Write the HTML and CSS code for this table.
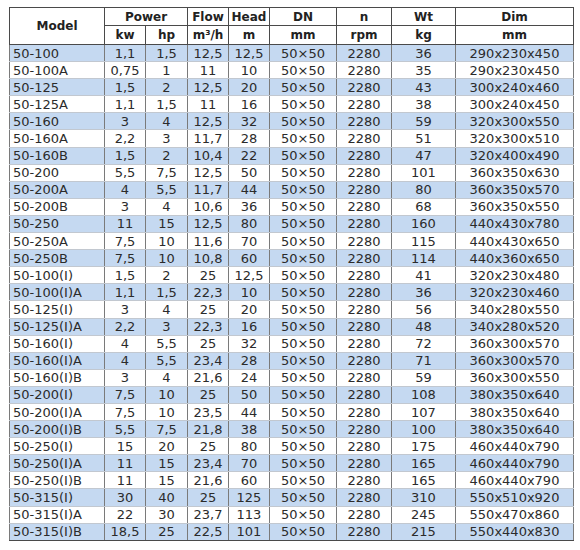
FILE: index.html
```html
<!DOCTYPE html>
<html>
<head>
<meta charset="utf-8">
<link rel="stylesheet" href="styles.css">
</head>
<body>
<table class="spec">
<colgroup>
<col class="c-model"><col class="c-kw"><col class="c-hp"><col class="c-flow"><col class="c-head"><col class="c-dn"><col class="c-n"><col class="c-wt"><col class="c-dim">
</colgroup>
<thead>
<tr class="h1">
<th rowspan="2">Model</th><th colspan="2">Power</th><th>Flow</th><th>Head</th><th>DN</th><th>n</th><th>Wt</th><th>Dim</th>
</tr>
<tr class="h2">
<th>kw</th><th>hp</th><th>m³/h</th><th>m</th><th>mm</th><th>rpm</th><th>kg</th><th>mm</th>
</tr>
</thead>
<tbody>
<tr><td>50-100</td><td>1,1</td><td>1,5</td><td>12,5</td><td>12,5</td><td>50×50</td><td>2280</td><td>36</td><td>290x230x450</td></tr>
<tr><td>50-100A</td><td>0,75</td><td>1</td><td>11</td><td>10</td><td>50×50</td><td>2280</td><td>35</td><td>290x230x450</td></tr>
<tr><td>50-125</td><td>1,5</td><td>2</td><td>12,5</td><td>20</td><td>50×50</td><td>2280</td><td>43</td><td>300x240x460</td></tr>
<tr><td>50-125A</td><td>1,1</td><td>1,5</td><td>11</td><td>16</td><td>50×50</td><td>2280</td><td>38</td><td>300x240x450</td></tr>
<tr><td>50-160</td><td>3</td><td>4</td><td>12,5</td><td>32</td><td>50×50</td><td>2280</td><td>59</td><td>320x300x550</td></tr>
<tr><td>50-160A</td><td>2,2</td><td>3</td><td>11,7</td><td>28</td><td>50×50</td><td>2280</td><td>51</td><td>320x300x510</td></tr>
<tr><td>50-160B</td><td>1,5</td><td>2</td><td>10,4</td><td>22</td><td>50×50</td><td>2280</td><td>47</td><td>320x400x490</td></tr>
<tr><td>50-200</td><td>5,5</td><td>7,5</td><td>12,5</td><td>50</td><td>50×50</td><td>2280</td><td>101</td><td>360x350x630</td></tr>
<tr><td>50-200A</td><td>4</td><td>5,5</td><td>11,7</td><td>44</td><td>50×50</td><td>2280</td><td>80</td><td>360x350x570</td></tr>
<tr><td>50-200B</td><td>3</td><td>4</td><td>10,6</td><td>36</td><td>50×50</td><td>2280</td><td>68</td><td>360x350x550</td></tr>
<tr><td>50-250</td><td>11</td><td>15</td><td>12,5</td><td>80</td><td>50×50</td><td>2280</td><td>160</td><td>440x430x780</td></tr>
<tr><td>50-250A</td><td>7,5</td><td>10</td><td>11,6</td><td>70</td><td>50×50</td><td>2280</td><td>115</td><td>440x430x650</td></tr>
<tr><td>50-250B</td><td>7,5</td><td>10</td><td>10,8</td><td>60</td><td>50×50</td><td>2280</td><td>114</td><td>440x360x650</td></tr>
<tr><td>50-100(I)</td><td>1,5</td><td>2</td><td>25</td><td>12,5</td><td>50×50</td><td>2280</td><td>41</td><td>320x230x480</td></tr>
<tr><td>50-100(I)A</td><td>1,1</td><td>1,5</td><td>22,3</td><td>10</td><td>50×50</td><td>2280</td><td>36</td><td>320x230x460</td></tr>
<tr><td>50-125(I)</td><td>3</td><td>4</td><td>25</td><td>20</td><td>50×50</td><td>2280</td><td>56</td><td>340x280x550</td></tr>
<tr><td>50-125(I)A</td><td>2,2</td><td>3</td><td>22,3</td><td>16</td><td>50×50</td><td>2280</td><td>48</td><td>340x280x520</td></tr>
<tr><td>50-160(I)</td><td>4</td><td>5,5</td><td>25</td><td>32</td><td>50×50</td><td>2280</td><td>72</td><td>360x300x570</td></tr>
<tr><td>50-160(I)A</td><td>4</td><td>5,5</td><td>23,4</td><td>28</td><td>50×50</td><td>2280</td><td>71</td><td>360x300x570</td></tr>
<tr><td>50-160(I)B</td><td>3</td><td>4</td><td>21,6</td><td>24</td><td>50×50</td><td>2280</td><td>59</td><td>360x300x550</td></tr>
<tr><td>50-200(I)</td><td>7,5</td><td>10</td><td>25</td><td>50</td><td>50×50</td><td>2280</td><td>108</td><td>380x350x640</td></tr>
<tr><td>50-200(I)A</td><td>7,5</td><td>10</td><td>23,5</td><td>44</td><td>50×50</td><td>2280</td><td>107</td><td>380x350x640</td></tr>
<tr><td>50-200(I)B</td><td>5,5</td><td>7,5</td><td>21,8</td><td>38</td><td>50×50</td><td>2280</td><td>100</td><td>380x350x640</td></tr>
<tr><td>50-250(I)</td><td>15</td><td>20</td><td>25</td><td>80</td><td>50×50</td><td>2280</td><td>175</td><td>460x440x790</td></tr>
<tr><td>50-250(I)A</td><td>11</td><td>15</td><td>23,4</td><td>70</td><td>50×50</td><td>2280</td><td>165</td><td>460x440x790</td></tr>
<tr><td>50-250(I)B</td><td>11</td><td>15</td><td>21,6</td><td>60</td><td>50×50</td><td>2280</td><td>165</td><td>460x440x790</td></tr>
<tr><td>50-315(I)</td><td>30</td><td>40</td><td>25</td><td>125</td><td>50×50</td><td>2280</td><td>310</td><td>550x510x920</td></tr>
<tr><td>50-315(I)A</td><td>22</td><td>30</td><td>23,7</td><td>113</td><td>50×50</td><td>2280</td><td>245</td><td>550x470x860</td></tr>
<tr><td>50-315(I)B</td><td>18,5</td><td>25</td><td>22,5</td><td>101</td><td>50×50</td><td>2280</td><td>215</td><td>550x440x830</td></tr>
</tbody>
</table>
</body>
</html>
```

FILE: styles.css
```css
html, body {
  margin: 0;
  padding: 0;
  background: #ffffff;
}

body {
  padding: 7px 0 0 9px;
  font-family: "DejaVu Sans", Verdana, sans-serif;
  color: #2b2b2b;
}

.spec {
  border-collapse: collapse;
  table-layout: fixed;
  width: 564px;
  border: 1px solid #4a4a4a;
}

.c-model { width: 95px; }
.c-kw { width: 41px; }
.c-hp { width: 42px; }
.c-flow { width: 41px; }
.c-head { width: 41px; }
.c-dn { width: 67px; }
.c-n { width: 55px; }
.c-wt { width: 64px; }
.c-dim { width: 118px; }

.spec th {
  font-size: 12px;
  font-weight: bold;
  color: #222;
  border: 1px solid #4a4a4a;
  padding: 0;
  text-align: center;
  white-space: nowrap;
  line-height: 14px;
}

.h1 { height: 18px; }
.h2 { height: 19px; }

.spec td {
  font-size: 13px;
  line-height: 15px;
  padding: 0;
  text-align: center;
  white-space: nowrap;
  border-left: 1px solid #7a7a7a;
  border-right: 1px solid #7a7a7a;
  border-bottom: 1px solid #c2c8d0;
}

.spec td:first-child {
  text-align: left;
  padding-left: 3px;
}

.spec tbody tr {
  height: 17.1px;
}

.spec tbody tr:nth-child(odd) td {
  background: #c5d9f1;
}

.spec tbody tr:last-child td {
  border-bottom: 1px solid #4a4a4a;
}
```
